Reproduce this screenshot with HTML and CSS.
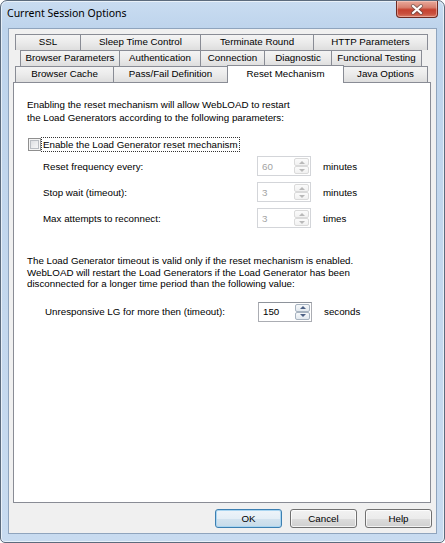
FILE: index.html
```html
<!DOCTYPE html>
<html>
<head>
<meta charset="utf-8">
<title>Current Session Options</title>
<link rel="stylesheet" href="styles.css">
</head>
<body>
<div class="window">
  <div class="titlebar">
    <span class="title">Current Session Options</span>
    <div class="close">
      <svg width="14" height="11" viewBox="0 0 14 11">
        <path d="M3 2 L11 9 M11 2 L3 9" stroke="#4a4a4a" stroke-width="4" stroke-linecap="round" opacity="0.55"/>
        <path d="M3 2 L11 9 M11 2 L3 9" stroke="#ffffff" stroke-width="2.2" stroke-linecap="round"/>
      </svg>
    </div>
  </div>
  <div class="client">
    <div class="tabs">
      <div class="tabrow r1">
        <div class="tab t-ssl">SSL</div>
        <div class="tab t-sleep">Sleep Time Control</div>
        <div class="tab t-term">Terminate Round</div>
        <div class="tab t-http last">HTTP Parameters</div>
      </div>
      <div class="tabrow r2">
        <div class="tab t-bp">Browser Parameters</div>
        <div class="tab t-auth">Authentication</div>
        <div class="tab t-conn">Connection</div>
        <div class="tab t-diag">Diagnostic</div>
        <div class="tab t-ft last">Functional Testing</div>
      </div>
      <div class="tabrow r3">
        <div class="tab t-bc">Browser Cache</div>
        <div class="tab t-pf">Pass/Fail Definition</div>
        <div class="tab t-rm sel">Reset Mechanism</div>
        <div class="tab t-java last after-sel">Java Options</div>
      </div>
    </div>
    <div class="panel">
      <p class="intro">Enabling the reset mechanism will allow WebLOAD to restart<br>the Load Generators according to the following parameters:</p>
      <div class="check">
        <span class="box"></span>
        <span class="focus">Enable the Load Generator reset mechanism</span>
      </div>
      <div class="params">
        <div class="row">
          <span class="lbl">Reset frequency every:</span>
          <div class="spin dis"><span class="val">60</span><span class="arrows"><span class="up"></span><span class="down"></span></span></div>
          <span class="unit">minutes</span>
        </div>
        <div class="row">
          <span class="lbl">Stop wait (timeout):</span>
          <div class="spin dis"><span class="val">3</span><span class="arrows"><span class="up"></span><span class="down"></span></span></div>
          <span class="unit">minutes</span>
        </div>
        <div class="row">
          <span class="lbl">Max attempts to reconnect:</span>
          <div class="spin dis"><span class="val">3</span><span class="arrows"><span class="up"></span><span class="down"></span></span></div>
          <span class="unit">times</span>
        </div>
      </div>
      <p class="note">The Load Generator timeout is valid only if the reset mechanism is enabled.<br>WebLOAD will restart the Load Generators if the Load Generator has been<br>disconnected for a longer time period than the following value:</p>
      <div class="row unresp">
        <span class="lbl">Unresponsive LG for more then (timeout):</span>
        <div class="spin"><span class="val">150</span><span class="arrows"><span class="up"></span><span class="down"></span></span></div>
        <span class="unit">seconds</span>
      </div>
    </div>
    <div class="buttons">
      <button class="btn def">OK</button>
      <button class="btn">Cancel</button>
      <button class="btn">Help</button>
    </div>
  </div>
</div>
</body>
</html>
```
FILE: styles.css
```css
* { box-sizing: border-box; }
html, body { margin: 0; padding: 0; background: #ffffff; }
body {
  width: 445px;
  height: 543px;
  overflow: hidden;
  font-family: "Liberation Sans", Arial, sans-serif;
  font-size: 9.75px;
  color: #000;
}
.window {
  width: 445px;
  height: 543px;
  border: 1px solid #5c6b7d;
  border-radius: 7px 7px 5px 5px;
  background: linear-gradient(180deg, #c9dcf1 0px, #bed4ec 27px, #c4d8ee 60%, #c8dbf0 100%);
  box-shadow: inset 0 0 0 1px rgba(255,255,255,0.6);
  display: flex;
  flex-direction: column;
}
.titlebar {
  height: 27px;
  display: flex;
  align-items: flex-start;
  padding-left: 6px;
}
.title {
  flex: 1;
  font-family: "Noto Sans", "Liberation Sans", sans-serif;
  font-size: 10.5px;
  line-height: 24px;
  color: #000;
}
.close {
  width: 42px;
  height: 17px;
  margin-right: 6px;
  border: 1px solid #6e2a22;
  border-top: none;
  border-radius: 0 0 4px 4px;
  background: linear-gradient(180deg, #e9a99b 0%, #d8806f 40%, #c5412f 55%, #c9503e 80%, #d97b66 100%);
  box-shadow: inset 0 0 0 1px rgba(255,220,210,0.45);
  display: flex;
  align-items: center;
  justify-content: center;
}
.close svg { display: block; }
.client {
  flex: 1;
  margin: 0 7px 8px;
  background: #f0f0f0;
  border: 1px solid #8fa4bd;
  display: flex;
  flex-direction: column;
}
.tabs { margin-top: 5px; }
.tabrow { display: flex; height: 16px; }
.r1 { margin-left: 6px; }
.r2 { margin-left: 11px; }
.r3 { margin-left: 6px; align-items: flex-end; }
.tab {
  height: 16px;
  border: 1px solid #898c95;
  border-right: none;
  border-bottom: none;
  background: linear-gradient(180deg, #f4f4f4 0%, #ebebeb 50%, #dedede 100%);
  text-align: center;
  line-height: 14px;
  white-space: nowrap;
  flex: none;
}
.tab.last { border-right: 1px solid #898c95; }
.tab.sel {
  height: 18px;
  margin-bottom: -1px;
  background: #ffffff;
  border-right: 1px solid #898c95;
  position: relative;
  z-index: 1;
  line-height: 15px;
}
.tab.after-sel { border-left: none; }
.t-ssl { width: 65px; }
.t-sleep { width: 120px; }
.t-term { width: 113px; }
.t-http { width: 115px; }
.t-bp { width: 99px; }
.t-auth { width: 81px; }
.t-conn { width: 64px; }
.t-diag { width: 67px; }
.t-ft { width: 91px; }
.t-bc { width: 98px; }
.t-pf { width: 114px; }
.t-rm { width: 117px; }
.t-java { width: 84px; }

.panel {
  margin-left: 4px;
  width: 418px;
  height: 421px;
  background: #ffffff;
  border: 1px solid #898c95;
  padding-left: 13px;
}
.intro {
  margin: 15px 0 0;
  line-height: 13px;
}
.check {
  display: flex;
  align-items: center;
  height: 15px;
  margin-top: 13px;
  margin-left: 1px;
}
.box {
  width: 13px;
  height: 13px;
  border: 1px solid #8f8f8f;
  background: linear-gradient(135deg, #d6d8dc 0%, #eeeff1 60%, #fbfbfb 100%);
  box-shadow: inset 0 0 0 1px #f4f4f4, inset 0 0 0 2px #b9bdc3;
}
.focus {
  margin-left: 0;
  padding: 0 1px 0 1px;
  border: 1px dotted #333;
  line-height: 13px;
}
.params {
  margin-top: 4px;
  display: flex;
  flex-direction: column;
  gap: 6px;
}
.row {
  display: grid;
  grid-template-columns: 202px 54px auto;
  column-gap: 12px;
  align-items: center;
  height: 20px;
  padding-left: 16px;
}
.row.unresp {
  margin-top: 12px;
  padding-left: 18px;
  grid-template-columns: 201px 54px auto;
}
.note {
  margin: 27px 0 0;
  line-height: 11.5px;
}
.spin {
  width: 54px;
  height: 20px;
  border: 1px solid #abadb3;
  border-top-color: #8e939b;
  background: #fff;
  display: flex;
  align-items: center;
  justify-content: space-between;
  padding: 0 1px 0 4px;
}
.spin.dis {
  border-color: #d3d5d9;
  color: #a3a3a3;
}
.arrows {
  display: flex;
  flex-direction: column;
  width: 15px;
  height: 16px;
  gap: 0;
}
.arrows span {
  flex: 1;
  display: flex;
  align-items: center;
  justify-content: center;
  border: 1px solid #a7b3c0;
  border-radius: 2px;
  background: linear-gradient(180deg, #f6f8fa 0%, #e3e9ef 100%);
  color: #4d6185;
}
.spin.dis .arrows span {
  border-color: #dadada;
  background: linear-gradient(180deg, #fbfbfb 0%, #f1f1f1 100%);
  color: #b9b9b9;
}
.arrows .up::before {
  content: "";
  border: 3px solid transparent;
  border-top-width: 0;
  border-bottom-color: currentColor;
}
.arrows .down::before {
  content: "";
  border: 3px solid transparent;
  border-bottom-width: 0;
  border-top-color: currentColor;
}
.buttons {
  display: flex;
  justify-content: flex-end;
  gap: 8px;
  margin-top: 6px;
  padding-right: 4px;
}
.btn {
  width: 67px;
  height: 19px;
  padding: 0;
  border: 1px solid #707070;
  border-radius: 3px;
  background: linear-gradient(180deg, #f2f2f2 0%, #ebebeb 50%, #dddddd 51%, #cfcfcf 100%);
  box-shadow: inset 0 0 0 1px rgba(255,255,255,0.75);
  font-family: "Liberation Sans", Arial, sans-serif;
  font-size: 9.75px;
  color: #000;
}
.btn.def {
  border-color: #3c7fb1;
  background: linear-gradient(180deg, #eef4f9 0%, #e4eef6 50%, #d3e3ef 51%, #c7dbe9 100%);
  box-shadow: inset 0 0 0 1px #a9d5f1;
}
```
